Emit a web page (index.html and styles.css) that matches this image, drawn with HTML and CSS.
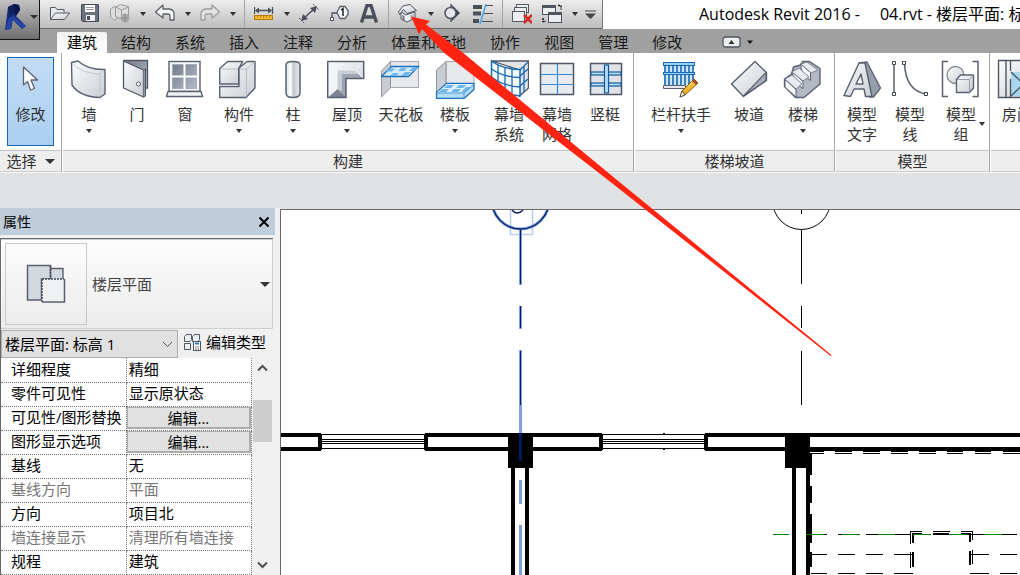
FILE: index.html
```
<!DOCTYPE html>
<html lang="zh-CN">
<head>
<meta charset="utf-8">
<meta name="viewport" content="width=device-width, initial-scale=1">
<title>Autodesk Revit 2016</title>
<link rel="stylesheet" href="styles.css">
</head>
<body>
<div class="app">
  <svg class="defs" width="0" height="0" aria-hidden="true">
    <defs>
      <linearGradient id="g" x1="0" y1="0" x2="1" y2="1"><stop offset="0" stop-color="#fdfdfe"/><stop offset="1" stop-color="#c9cdd4"/></linearGradient>
      <linearGradient id="gd" x1="0" y1="0" x2="1" y2="1"><stop offset="0" stop-color="#737b8b"/><stop offset="1" stop-color="#b4bac6"/></linearGradient>
      <linearGradient id="gh" x1="0" y1="0" x2="1" y2="0"><stop offset="0" stop-color="#dfe2e6"/><stop offset=".35" stop-color="#ffffff"/><stop offset=".5" stop-color="#c3c8cf"/><stop offset="1" stop-color="#e8eaed"/></linearGradient>
      <linearGradient id="go" x1="0" y1="0" x2="0" y2="1"><stop offset="0" stop-color="#ffd75e"/><stop offset="1" stop-color="#e39a0b"/></linearGradient>
    </defs>
  </svg>

  <header class="header">
    <button class="app-button" type="button" aria-label="应用程序菜单">
      <svg width="22" height="28" viewBox="5 2 22 28"><path d="M8 6 14 3l5 1 1 5-4 6 10 10-4 3-9-9-2 9-6 1z" fill="#17307f"/><path d="M14 3l5 1 1 5-4 6-2-3z" fill="#0b174a"/><path d="M8 6 14 3v9l-5 5z" fill="#10205e"/><path d="M13 15l13 10-4 3-9-9z" fill="#2846a5"/><path d="M9 17l4-2-2 13-6 1z" fill="#2644a0"/></svg>
      <i class="caret caret-wide"></i>
    </button>
    <div class="title-row">
      <div class="quick-access">
        <button class="tool" type="button" aria-label="打开"><svg width="20" height="20" viewBox="50 4 20 20"><path d="M50.500 19.500V7.500h5l1.500 2h7v3" fill="#e9eaec" stroke="#555a63"/><path d="M50.500 19.500l5-6.500h14l-5 6.500z" fill="url(#g)" stroke="#555a63" stroke-linejoin="round"/></svg></button>
        <button class="tool" type="button" aria-label="保存"><svg width="20" height="20" viewBox="80 4 20 20"><path d="M81.500 4.500h17v17h-16l-1-1z" fill="#69707e" stroke="#444a56"/><path d="M85 5h10v7H85z" fill="#fff"/><path d="M86 7.500h8M86 9.500h8" stroke="#9aa0aa"/><path d="M86 15h9v6h-9z" fill="#eef0f2"/><path d="M87 16h3v4h-3z" fill="#4b5260"/></svg></button>
        <button class="tool" type="button" aria-label="同步"><svg width="20" height="20" viewBox="110 4 20 20"><g fill="#dedede" stroke="#9a9a9a"><path d="M110.500 9l4-2.500 3 1.500v10l-3 2-4-2.500z"/><path d="M115.500 7l5-2.500 8 2v10l-6 3-7-3z"/><path d="M115.500 7l6 3 7-3M121.500 10v9"/></g><circle cx="125" cy="18" r="4.500" fill="#a9a9a9"/><path d="M121 18h8M125 14v8" stroke="#8b8b8b"/></svg></button>
        <button class="drop" type="button" aria-label="同步选项"><i class="caret"></i></button>
        <button class="tool" type="button" aria-label="放弃"><svg width="20" height="20" viewBox="155 4 20 20"><path d="M155.500 12l7.500-7v4h6q5 .5 5 5v6h-4v-4q0-2-2-2h-5v4z" fill="#f5f5f6" stroke="#5c616b" stroke-width="1.300" stroke-linejoin="round"/></svg></button>
        <button class="drop" type="button" aria-label="放弃列表"><i class="caret"></i></button>
        <button class="tool" type="button" aria-label="重做"><svg width="20" height="20" viewBox="199 4 20 20"><path d="M218.500 12l-7.500-7v4h-6q-5 .5-5 5v6h4v-4q0-2 2-2h5v4z" fill="#e4e4e4" stroke="#9d9d9d" stroke-width="1.300" stroke-linejoin="round"/></svg></button>
        <button class="drop" type="button" aria-label="重做列表"><i class="caret"></i></button>
        <span class="tool-sep"></span>
        <button class="tool" type="button" aria-label="测量"><svg width="20" height="20" viewBox="254 4 20 20"><path d="M254.500 7v7M272.500 7v7M256 10.500h15" stroke="#4b505b" stroke-width="1.300"/><path d="M255 10.500l4-3v6zM272 10.500l-4-3v6z" fill="#4b505b"/><rect x="254.500" y="15.500" width="18" height="4" fill="#f7b92b" stroke="#b87a08"/><path d="M257.500 16v1.500M260.500 16v1.500M263.500 16v1.500M266.500 16v1.500M269.500 16v1.500" stroke="#b87a08"/></svg></button>
        <button class="drop" type="button" aria-label="测量选项"><i class="caret"></i></button>
        <button class="tool" type="button" aria-label="对齐尺寸标注"><svg width="20" height="20" viewBox="299 4 20 20"><path d="M302 20l13-12" stroke="#4b505b" stroke-width="1.500"/><path d="M301 21l2-7 5 5zM317 6l-7 2 5 5z" fill="#4b505b"/><path d="M299 18l5 5M313 4l6 6" stroke="#4b505b" stroke-dasharray="2 1"/></svg></button>
        <button class="tool" type="button" aria-label="按类别标记"><svg width="20" height="20" viewBox="329 4 20 20"><path d="M332 18v-5h5" fill="none" stroke="#4b505b" stroke-width="1.300"/><path d="M330.500 17.500h3v3h-3z" fill="#fff" stroke="#4b505b"/><path d="M337 12.500l3-6h5l3 4v4l-3 4h-5z" fill="#f6f7f8" stroke="#5c616b" stroke-width="1.300"/><path d="M341 10l2-1.500V16" fill="none" stroke="#222" stroke-width="1.500"/></svg></button>
        <button class="tool" type="button" aria-label="文字"><svg width="20" height="20" viewBox="359 4 20 20"><path d="M361.500 22.500L367 5.500h4l5.500 17M364 17h10" fill="none" stroke="#4a4f59" stroke-width="3.400"/></svg></button>
        <span class="tool-sep"></span>
        <button class="tool" type="button" aria-label="默认三维视图"><svg width="20" height="20" viewBox="398 4 20 20"><path d="M401 12l5 3 9-3v6l-8 4-6-3z" fill="#f2f3f5" stroke="#505560"/><path d="M398.500 12l4.500-6 7-1.500 6.500 6-9.500 3-3.500-4-4 5z" fill="url(#g)" stroke="#505560" stroke-linejoin="round"/><path d="M402.500 15v5l2 1v-5z" fill="#6c7380"/><path d="M410 15l4-1v4l-4 1.500z" fill="#b8bdc6"/></svg></button>
        <button class="drop" type="button" aria-label="三维视图选项"><i class="caret"></i></button>
        <button class="tool" type="button" aria-label="剖面"><svg width="20" height="20" viewBox="443 4 20 20"><path d="M452 5l8 8-8 8z" fill="#3f4550"/><circle cx="450.500" cy="13" r="5.500" fill="#e6e8eb" stroke="#505560" stroke-width="1.500"/><path d="M451 4v4M451 18v4" stroke="#505560" stroke-width="1.500"/></svg></button>
        <button class="tool" type="button" aria-label="细线"><svg width="20" height="20" viewBox="473 4 20 20"><path d="M473 7h9M473 13.500h8M473 21h6" stroke="#4a4f5b" stroke-width="4"/><path d="M486 5.500h7M484 13.500h9M482 21.500h11" stroke="#4a4f5b" stroke-width="1"/><path d="M486 4l-6 20" stroke="#4ba2ef" stroke-width="1.500"/></svg></button>
        <span class="tool-sep"></span>
        <button class="tool" type="button" aria-label="关闭隐藏窗口"><svg width="20" height="20" viewBox="512 4 20 20"><g fill="#eceef0" stroke="#555b66"><rect x="516.500" y="4.500" width="12" height="8"/><rect x="514.500" y="7.500" width="12" height="8"/><rect x="512.500" y="11.500" width="12" height="10"/></g><path d="M524 15l8 8M532 15l-8 8" stroke="#d42a2a" stroke-width="2.600"/></svg></button>
        <button class="tool" type="button" aria-label="切换窗口"><svg width="20" height="20" viewBox="542 4 20 20"><rect x="542.500" y="5.500" width="13" height="9" fill="#eceef0" stroke="#4e5460"/><path d="M542 6.500h14" stroke="#4e5460" stroke-width="3"/><rect x="548.500" y="12.500" width="13" height="10" fill="#eceef0" stroke="#4e5460"/><path d="M548 13.500h14" stroke="#4e5460" stroke-width="3"/><path d="M558 5.500h3v4M543 18v3.500h3" fill="none" stroke="#111" stroke-width="1.500" stroke-dasharray="2 1"/></svg></button>
        <button class="drop" type="button" aria-label="窗口列表"><i class="caret"></i></button>
        <button class="drop drop-last" type="button" aria-label="自定义快速访问工具栏"><svg width="11" height="9" viewBox="0 0 11 9"><path d="M0 1h11" stroke="#444"/><path d="M0 3.500h11L5.500 9z" fill="#444"/></svg></button>
      </div>
      <h1 class="title"><span>Autodesk Revit 2016 -</span><span>04.rvt - 楼层平面: 标高 1</span></h1>
    </div>
    <nav class="tabs">
      <button class="tab tab-active" type="button">建筑</button>
      <button class="tab" type="button">结构</button>
      <button class="tab" type="button">系统</button>
      <button class="tab" type="button">插入</button>
      <button class="tab" type="button">注释</button>
      <button class="tab" type="button">分析</button>
      <button class="tab" type="button">体量和场地</button>
      <button class="tab" type="button">协作</button>
      <button class="tab" type="button">视图</button>
      <button class="tab" type="button">管理</button>
      <button class="tab" type="button">修改</button>
      <button class="ribbon-toggle" type="button" aria-label="最小化功能区"><svg width="32" height="12" viewBox="0 0 32 12"><rect x="1" y="1" width="17" height="10" rx="2.500" fill="#eceef0" stroke="#4f5560" stroke-width="1.300"/><path d="M6.500 8h6l-3-4z" fill="#333"/><path d="M25 4.500h6L28 8z" fill="#111"/></svg></button>
    </nav>
  </header>

  <section class="ribbon">
    <div class="panel panel-select">
      <div class="panel-body">
        <button class="modify" type="button"><svg width="40" height="40" viewBox="11 62 40 40"><path d="M23.500 67v18l4-3.500 3 8.500 4-1.500-3.500-8.500h6.500z" fill="#fff" stroke="#5c6370" stroke-width="1.300" stroke-linejoin="round"/></svg>修改</button>
      </div>
      <div class="panel-foot">选择 <i class="caret caret-big"></i></div>
    </div>

    <div class="panel panel-build">
      <div class="panel-body">
        <button class="cmd" type="button"><svg width="40" height="40" viewBox="68 59 40 40"><path d="M70.500 62.500L77 61q10 9 27 8.500V94l-5 3.500Q79 97 71 85z" fill="url(#g)" stroke="#596070" stroke-width="1.400" stroke-linejoin="round"/><path d="M71.500 63.500q9 10 27.500 10.500l4-3.500M99 74v22.500" fill="none" stroke="#c3c7cf"/></svg>墙<i class="caret"></i></button>
        <button class="cmd" type="button"><svg width="40" height="40" viewBox="116 59 40 40"><path d="M122.500 60.500h24V88h-5" fill="url(#gd)" stroke="#4f5664" stroke-width="1.300"/><path d="M122.500 61l20 9v27l-20-9z" fill="url(#g)" stroke="#4f5664" stroke-width="1.300" stroke-linejoin="round"/><path d="M142.500 70l2-1v27l-2 1" fill="#9097a4" stroke="#4f5664"/><circle cx="137.500" cy="84" r="2" fill="#fff" stroke="#596070"/></svg>门</button>
        <button class="cmd" type="button"><svg width="40" height="40" viewBox="165 59 40 40"><rect x="169" y="61.500" width="31" height="30" fill="#f5f6f8" stroke="#596070" stroke-width="1.400"/><rect x="172.500" y="64.500" width="24" height="24" fill="url(#gd)" stroke="#a6acb8"/><path d="M184.500 64v25M172 76.500h25" stroke="#fff" stroke-width="2"/><path d="M168 91.500h33l1.500 5h-36z" fill="#f2f3f5" stroke="#596070" stroke-width="1.400" stroke-linejoin="round"/></svg>窗</button>
        <button class="cmd cmd-wide" type="button"><svg width="40" height="40" viewBox="219 59 40 40"><g fill="url(#g)" stroke="#596070" stroke-width="1.400" stroke-linejoin="round"><path d="M219.700 68.500l8-7h15l-4 7v15.500h-19z"/><path d="M239 68l8-6.500h8V88l-9 9.500h-26.300v-11h19.300z"/></g><path d="M220.500 69h17.500M240 69h6.500l8-7M246.500 69v27.500" fill="none" stroke="#b9bec7"/></svg>构件<i class="caret"></i></button>
        <button class="cmd" type="button"><svg width="40" height="40" viewBox="271 59 40 40"><path d="M284 65q0-3.500 7-3.500t7 3.500v28q0 4.500-7 4.500t-7-4.500z" fill="url(#gh)" stroke="#596070" stroke-width="1.500"/></svg>柱<i class="caret"></i></button>
        <button class="cmd cmd-wide" type="button"><svg width="40" height="40" viewBox="326 59 40 40"><path d="M326.700 61.500h36v17H345v19h-18.300z" fill="url(#g)"/><path d="M336 70h17l9 8h-17v19l-9-8z" fill="#9da4b1"/><path d="M327 62l9 8v19l-9 8z" fill="#f4f5f7"/><path d="M336 89l9 8h-18z" fill="#7d8594"/><path d="M336 70h17l4 4h-16v17l-5-2z" fill="#c9cdd5"/><path d="M327 62l9 8h18l8-8M336 70v19l-9 8M354 70l8 8" fill="none" stroke="#f5f6f8"/><path d="M326.700 61.500h36v17H345v19h-18.300z" fill="none" stroke="#596070" stroke-width="1.500"/></svg>屋顶<i class="caret"></i></button>
        <button class="cmd" type="button"><svg width="40" height="40" viewBox="381 59 40 40"><path d="M390.500 61.500h28v26h-28z" fill="#e7e8eb" stroke="#a3a7af"/><path d="M381.500 71l9-9.500v26l-9 9.500z" fill="#c9ccd1" stroke="#8f949e"/><path d="M381.500 76.500l10-10h27l-10 10z" fill="#d5ebfb" stroke="#1c70bd" stroke-width="1.300"/><path d="M389 68.500h6l-3 3h-6zM401 68h6l-3 3h-6zM393 73h6l-3 3h-6zM405 72h6l-4 4h-6zM413 67h5l-4 4h-5z" fill="#6db5ee"/></svg>天花板</button>
        <button class="cmd cmd-wide" type="button"><svg width="40" height="40" viewBox="435 59 40 40"><path d="M446 61.500h28V84h-28z" fill="#e7e8eb" stroke="#a3a7af"/><path d="M436.500 70l9.500-8.500V84l-9.500 9z" fill="#c9ccd1" stroke="#8f949e"/><path d="M436.500 92.500l10-9H474v6l-10 9h-27.500z" fill="#b5dcf6" stroke="#1c70bd" stroke-width="1.300" stroke-linejoin="round"/><path d="M437 92.500l10-8.500h26.500L464 92.500z" fill="#e0f1fd"/><path d="M447 85h7l-3 3h-7zM459 85h7l-3 3h-7zM442 89h7l-3 3h-7zM454 89h7l-3 3h-7zM466 87h5l-5 5h-5z" fill="#6db5ee"/><path d="M437 93h27l9.500-8.500M464 93v5" fill="none" stroke="#4a9bd9"/></svg>楼板<i class="caret"></i></button>
        <button class="cmd" type="button"><svg width="40" height="40" viewBox="489 59 40 40"><path d="M492 61h36.500v27l-9 8V70z" fill="#e2e4e8" stroke="#4f5664" stroke-width="1.300"/><path d="M491.500 61Q502 69 520 69.500V96q-17-2-28.500-12z" fill="#f5faff" stroke="#1769b3" stroke-width="1.500"/><path d="M491.500 69q11 8 28.500 8.500M491.500 77q11 9 28.500 10M498 65v24M505 68v25M512 69v26M520 76l8-7M520 86l8-7M520 70l8-8M524 66v26" fill="none" stroke="#1769b3" stroke-width="1.300"/></svg>幕墙<br>系统</button>
        <button class="cmd" type="button"><svg width="40" height="40" viewBox="537 59 40 40"><rect x="540.500" y="63.500" width="33" height="31" fill="#e8eaed" stroke="#4f5664" stroke-width="1.500"/><path d="M557.500 64v30M541 74.500h33M541 84.500h33" stroke="#2f8be0" stroke-width="1.200"/></svg>幕墙<br>网格</button>
        <button class="cmd" type="button"><svg width="40" height="40" viewBox="585 59 40 40"><rect x="590.500" y="63.500" width="31" height="31" fill="#dfe2e7" stroke="#4f5664" stroke-width="1.500"/><g fill="#b9def8" stroke="#0f5a9c" stroke-width="1.200"><rect x="591" y="72" width="30" height="3"/><rect x="591" y="83" width="30" height="3"/><rect x="604.500" y="65" width="4" height="28"/></g></svg>竖梃</button>
      </div>
      <div class="panel-foot">构建</div>
    </div>

    <div class="panel">
      <div class="panel-body">
        <button class="cmd cmd-extra" type="button"><svg width="40" height="40" viewBox="661 59 40 40"><path d="M664 66h30v19h-30z" fill="#cfe6f8"/><path d="M665 75v10M669 75v10M673 75v10M677 75v10M681 75v10M685 75v10M689 75v10M693 75v8M665 66v6M669 66v6M673 66v6M677 66v6M681 66v6M685 66v6M689 66v6M693 66v6" stroke="#1769b3" stroke-width="1.600"/><g stroke="#1769b3" fill="#9ed1f6"><rect x="663.500" y="62.500" width="31" height="3"/><rect x="663.500" y="72.500" width="31" height="2"/></g><path d="M663.500 85.500h22v3h-22z" fill="#e8eaed" stroke="#596070"/><path d="M680 97l2-6 12-12 4 4-13 12z" fill="url(#go)" stroke="#8a5b12"/><path d="M680 97l2-6 3 4z" fill="#fff4da" stroke="#555"/><path d="M692 81l2-2 4 4-2 2z" fill="#a44c24"/></svg>栏杆扶手<i class="caret"></i></button>
        <button class="cmd" type="button"><svg width="40" height="40" viewBox="729 59 40 40"><path d="M731.500 84L755 61.500l11.500 11v8L743.500 96.500z" fill="url(#g)" stroke="#596070" stroke-width="1.400" stroke-linejoin="round"/><path d="M743.500 96l22.500-23.500v8z" fill="#a9afba" stroke="#596070" stroke-width="1.200" stroke-linejoin="round"/></svg>坡道</button>
        <button class="cmd cmd-wide" type="button"><svg width="40" height="40" viewBox="782 59 40 40"><path d="M783.500 79l7-5 2-7 7-2 2-3.500h7l10.500 7V84l-16 13.500h-8.500l-11-11z" fill="#b3b8c2" stroke="#596070" stroke-width="1.400" stroke-linejoin="round"/><path d="M784 79.500l11 10v7.500l-11-10zM791 72l11 9.500v7l-8-6zM799.500 64l10 8.500v8l-8-6z" fill="#fafafb" stroke="#596070" stroke-linejoin="round"/><path d="M784 79l7-4 10 9-6 5zM791 72l7-4 10 9-6 4zM800 64l6-2 11 8-7 3z" fill="#e8eaee" stroke="#7b818e"/></svg>楼梯<i class="caret"></i></button>
      </div>
      <div class="panel-foot">楼梯坡道</div>
    </div>

    <div class="panel">
      <div class="panel-body">
        <button class="cmd" type="button"><svg width="40" height="40" viewBox="842 59 40 40"><path d="M859 63l8-1 13.500 26-7 9h-4z" fill="#969dab" stroke="#596070" stroke-width="1.300" stroke-linejoin="round"/><path d="M844 95.500L859 63h6l7 33.500h-6.500L864 89h-10l-3.500 7.500zM856 84h7l-2-10z" fill="url(#g)" fill-rule="evenodd" stroke="#596070" stroke-width="1.400" stroke-linejoin="round"/></svg>模型<br>文字</button>
        <button class="cmd" type="button"><svg width="40" height="40" viewBox="890 59 40 40"><path d="M894 63v31M904.500 63q1 28 22 31" fill="none" stroke="#596070" stroke-width="1.500"/><g fill="#fff" stroke="#3f4550"><path d="M892.500 61.500h3v3h-3zM892.500 92.500h3v3h-3zM902.500 61.500h3v3h-3zM924.500 92.500h3v3h-3z"/></g></svg>模型<br>线</button>
        <button class="cmd cmd-group" type="button"><svg width="40" height="40" viewBox="940 59 40 40"><path d="M947 61.500h-5.500v35h5.500M971.500 61.500h5.500v35h-5.500" fill="none" stroke="#596070" stroke-width="1.500"/><circle cx="954.500" cy="75" r="8.500" fill="url(#g)" stroke="#848a96" stroke-width="1.300"/><path d="M955.500 79.500l4-4.500h13v13l-4 4.500h-13z" fill="url(#g)" stroke="#596070" stroke-width="1.400" stroke-linejoin="round"/><path d="M956 79.500h12.500v13M968.500 79.500l4-4.500" fill="none" stroke="#969ca8"/></svg><span>模型<br>组</span><i class="caret caret-side"></i></button>
      </div>
      <div class="panel-foot">模型</div>
    </div>

    <div class="panel panel-rest">
      <div class="panel-body">
        <button class="cmd" type="button"><svg width="40" height="40" viewBox="997 59 40 40"><path d="M998.500 60.500h38v37h-38z" fill="url(#g)" stroke="#4f5664" stroke-width="1.400"/><path d="M1011 72h25v24h-25z" fill="#a9d8ec"/><path d="M1010.500 61v10M1010.500 79v18M1006 61v36M1011 72l25 24M1011 96l25-24" fill="none" stroke="#4f5664" stroke-width="1.400"/></svg>房间</button>
      </div>
      <div class="panel-foot"></div>
    </div>
  </section>

  <div class="options-bar"></div>

  <main class="workspace">
    <aside class="properties">
      <div class="prop-title"><h2>属性</h2><button class="close" type="button" aria-label="关闭"><svg width="12" height="12" viewBox="0 0 12 12"><path d="M1.500 1.500l9 9M10.500 1.500l-9 9" stroke="#000" stroke-width="2"/></svg></button></div>
      <div class="prop-body">
        <button class="type-picker" type="button">
          <span class="type-thumb"><svg width="42" height="42" viewBox="25 262 42 42"><path d="M46 267.500h17v16H46z" fill="#d3d7de" stroke="#596070" stroke-width="1.400"/><path d="M27.500 264.500h23v13.500h-9v21h-14z" fill="#d3d7de" stroke="#596070" stroke-width="1.500"/><path d="M42 278h22.500v23H42z" fill="#f0f1f3"/><path d="M64.500 278v23H42" fill="none" stroke="#596070" stroke-width="1.500"/><path d="M50.500 265v13M42 278h22M42 278v23" fill="none" stroke="#444b57" stroke-width="1.500" stroke-dasharray="2 1"/></svg></span>
          <span class="type-name">楼层平面</span><i class="caret caret-big"></i>
        </button>
        <div class="type-row">
          <div class="select-wrap"><select aria-label="视图"><option>楼层平面: 标高 1</option></select><svg class="chevron" width="11" height="7" viewBox="0 0 11 7"><path d="M1 1l4.500 4.500L10 1" fill="none" stroke="#555"/></svg></div>
          <button class="edit-type" type="button"><svg width="18" height="18" viewBox="0 0 18 18"><g fill="#eef0f3" stroke="#4f5664"><path d="M.5 3.500l2-2h5v5l-1.500 2H.500zM8.500 3.500l2-2h5v5l-1.500 2H8.500zM.500 10.500h6v6h-6z"/></g><rect x="9.500" y="8.500" width="7" height="9" fill="#fff" stroke="#4f5664"/><path d="M11 10.500h4" stroke="#2379c9" stroke-width="2"/><path d="M11 14h1.500m1 0H15M11 16h1.500m1 0H15" stroke="#555"/></svg>编辑类型</button>
        </div>
        <div class="grid-area">
          <table class="props">
            <tbody>
              <tr><th scope="row">详细程度</th><td>精细</td></tr>
              <tr><th scope="row">零件可见性</th><td>显示原状态</td></tr>
              <tr><th scope="row">可见性/图形替换</th><td class="has-button"><button class="edit" type="button">编辑...</button></td></tr>
              <tr><th scope="row">图形显示选项</th><td class="has-button"><button class="edit" type="button">编辑...</button></td></tr>
              <tr><th scope="row">基线</th><td>无</td></tr>
              <tr class="muted"><th scope="row">基线方向</th><td>平面</td></tr>
              <tr><th scope="row">方向</th><td>项目北</td></tr>
              <tr class="muted"><th scope="row">墙连接显示</th><td>清理所有墙连接</td></tr>
              <tr><th scope="row">规程</th><td>建筑</td></tr>
            </tbody>
          </table>
          <div class="scrollbar">
            <button type="button" aria-label="向上滚动"><svg width="11" height="8" viewBox="0 0 11 8"><path d="M1 6.500L5.500 2 10 6.500" fill="none" stroke="#505050" stroke-width="2"/></svg></button>
            <div class="track"><div class="thumb"></div></div>
            <button type="button" aria-label="向下滚动"><svg width="11" height="8" viewBox="0 0 11 8"><path d="M1 1.500L5.500 6 10 1.500" fill="none" stroke="#505050" stroke-width="2"/></svg></button>
          </div>
        </div>
      </div>
    </aside>

    <section class="canvas" aria-label="楼层平面">
      <svg class="drawing" viewBox="281 210 739 365" preserveAspectRatio="xMinYMin slice">
        <g fill="none">
          <path d="M510.500 210v24.500h22V210" stroke="#bccaf0" stroke-width="1.500"/>
          <circle cx="520.500" cy="200.500" r="28.500" stroke="#7f9fe0" stroke-width="3"/>
          <circle cx="520.500" cy="200.500" r="28.500" stroke="#041c66" stroke-width="1.300"/>
          <path d="M512 210q5 6 11 0" stroke="#041c66" stroke-width="1.500"/>
          <circle cx="801.500" cy="200.500" r="29" stroke="#000"/>
          <path d="M801.500 210v4M801.500 230v54M801.500 306v22M801.500 351v54" stroke="#000"/>
        </g>
        <g shape-rendering="crispEdges">
          <path d="M281 433h40v4h-40zM281 447h40v4h-40zM318 434h4v16h-4zM424 434h4v16h-4zM425 433h177v4H425zM425 447h177v4H425zM599 434h4v16h-4zM704 434h4v16h-4zM705 433h315v4H705zM705 447h315v4H705z"/>
          <path d="M508 433h25v35h-25zM785 433h25v35h-25zM511 468h4v107h-4zM525 468h4v107h-4zM792 468h4v107h-4zM806 468h4v107h-4z"/>
          <path d="M322 434.500h102M322 439.500h102M322 441.500h102M322 443.500h102M322 448.500h102M603 434.500h101M603 439.500h101M603 441.500h101M603 443.500h101M603 448.500h101M663 433.500h2M663 449.500h2" stroke="#000"/>
          <path d="M810 453.500h14M835 453.500h17M863 453.500h17M891 453.500h17M919 453.500h17M947 453.500h16M975 453.500h16M1003 453.500h17M810 451.500h14M835 451.500h17M863 451.500h17M891 451.500h17M919 451.500h17M947 451.500h16M975 451.500h16M1003 451.500h17" stroke="#000"/>
          <path d="M811 453v22M811 486v17M811 514v29M811 552v15" stroke="#000" stroke-width="2"/>
          <path d="M824 534.500h3M838 534.500h4M866 534.500h12M895 534.500h16M967 534.500h17M1002 534.500h15M811 554.500h16M838 554.500h17M866 554.500h17M894 554.500h19M971 554.500h18M1000 554.500h17M811 573.500h16M838 573.500h17M866 573.500h17M894 573.500h19M970 573.500h19M1000 573.500h17" stroke="#000"/>
          <path d="M910 531.500h12M933 531.500h17M961 531.500h12M910.500 531v13M910.500 552v16M972.500 531v9M972.500 550v14M912 533.500h10M961 533.500h10" fill="none" stroke="#000"/>
          <path d="M933 534h16M913 533v10M913 552v15M970 534v8M970 551v14" fill="none" stroke="#000" stroke-width="2"/>
          <path d="M773 534h16v1h-16zM806 534h18v1h-18zM842 534h18v1h-18zM878 534h17v1h-17zM913 534h18v1h-18zM949 534h18v1h-18zM984 534h18v1h-18z" fill="#008000"/>
          <path d="M520.500 230v55M520.500 306v23M520.500 350v83M520.500 480v24M520.500 525v50" stroke="#7f9fe0" stroke-width="3"/>
          <path d="M520.500 230v54M520.500 306v22M520.500 351v54" stroke="#041c66"/>
          <path d="M520.500 433v28" stroke="#001a5e" stroke-width="3"/>
        </g>
      </svg>
    </section>
  </main>

  <svg class="callout" width="1020" height="575" viewBox="0 0 1020 575" aria-hidden="true"><path d="M411 16.500l19 4.500-4 3.500L462 52l155 128 214.500 175-.8 1L608 180 443 52l-21-23-3 5.500z" fill="#ff2412"/></svg>
</div>
</body>
</html>
```
FILE: styles.css
```
* {
  box-sizing: border-box;
}

body {
  margin: 0;
  background: #e0e1e3;
  color: #000;
  font: 15px/20px "Open Sans", "Noto Sans CJK SC", sans-serif;
}

button,
select {
  margin: 0;
  padding: 0;
  border: 0;
  background: none;
  color: inherit;
  font: inherit;
}

h1,
h2 {
  margin: 0;
  font-weight: 400;
}

svg {
  display: block;
  flex: none;
}

.defs {
  position: absolute;
}

.app {
  position: relative;
  display: flex;
  flex-direction: column;
  min-height: 100vh;
  overflow: hidden;
}

.caret {
  flex: none;
  border: 3px solid transparent;
  border-top: 4px solid #333;
  border-bottom: 0;
}

.caret-big,
.caret-wide {
  border-width: 5px 5px 0;
}

.caret-wide {
  border-width: 4px 4px 0;
}

/* Header */

.header {
  display: grid;
  grid-template-columns: 40px minmax(0, 1fr);
  grid-template-rows: 29px 24px;
  background: #a0a0a0;
}

.app-button {
  grid-row: 1 / 3;
  display: flex;
  align-items: center;
  justify-content: center;
  gap: 3px;
  height: 40px;
  padding: 0 0 6px 4px;
  border: solid #111;
  border-width: 0 1px 1px 0;
  background: linear-gradient(#c2c2c2, #6e6e6e);
}

.title-row {
  display: flex;
  background: #fff;
}

.quick-access {
  flex: none;
  display: flex;
  align-items: center;
  padding: 0 3px 0 5px;
  border-right: 1px solid #777;
  border-bottom: 1px solid #696969;
  background: linear-gradient(#eeeeee, #bdbdbd);
}

.tool,
.drop {
  display: flex;
  align-items: center;
  justify-content: center;
  width: 30px;
  height: 28px;
}

.drop {
  width: 15px;
}

.drop-last {
  width: 17px;
}

.tool-sep {
  width: 1px;
  height: 28px;
  margin: 0 4px;
  background: #a5a5a5;
}

.title {
  display: flex;
  gap: 20px;
  min-width: 0;
  padding-left: 96px;
  overflow: hidden;
  font-size: 16px;
  line-height: 29px;
  white-space: nowrap;
}

.tabs {
  display: flex;
  gap: 4px;
  padding: 3px 0 0 17px;
  color: #1a1a1a;
  white-space: nowrap;
}

.tab {
  padding: 0 10px 2px;
}

.tab-active {
  border-radius: 2px 2px 0 0;
  background: linear-gradient(#f2f2f2, #ffffff);
  color: #000;
}

.ribbon-toggle {
  margin-left: 26px;
  padding-bottom: 2px;
}

/* Ribbon */

.ribbon {
  display: flex;
  gap: 1px;
  border-bottom: 1px solid #f8f8f8;
  background: #fff;
  color: #333;
  overflow: hidden;
}

.panel {
  flex: none;
  display: flex;
  flex-direction: column;
  border-right: 1px solid #a8a8a8;
}

.panel-body {
  display: flex;
  height: 97px;
  padding: 6px 1px 0 2px;
}

.panel-foot {
  display: flex;
  align-items: center;
  justify-content: center;
  gap: 8px;
  height: 22px;
  border-top: 1px solid #c6c6c6;
  border-bottom: 1px solid #cccccc;
  background: #eeeeee;
}

.panel-select {
  width: 62px;
}

.panel-select .panel-body {
  padding: 4px 7px;
}

.panel-build .panel-body {
  padding-right: 4px;
}

.panel-rest {
  flex: 1 0 auto;
  border-right: 0;
}

.modify {
  display: flex;
  flex-direction: column;
  align-items: center;
  gap: 2px;
  width: 47px;
  padding-top: 4px;
  border: 1px solid #1766b5;
  background: linear-gradient(#c3dcf5, #abcff0);
}

.cmd {
  position: relative;
  display: flex;
  flex-direction: column;
  align-items: center;
  width: 48px;
  white-space: nowrap;
}

.cmd svg {
  margin-bottom: 5px;
}

.cmd .caret {
  margin-top: 5px;
}

.cmd-wide {
  width: 60px;
}

.cmd-extra {
  width: 88px;
}

.cmd-group {
  width: 54px;
}

.cmd .caret-side {
  position: absolute;
  right: 3px;
  top: 58px;
}

.options-bar {
  height: 35px;
  background: #e0e1e3;
}

/* Workspace */

.workspace {
  flex: 1;
  display: grid;
  grid-template-columns: 280px minmax(0, 1fr);
}

.properties {
  display: flex;
  flex-direction: column;
  gap: 3px;
  padding-right: 5px;
  background: #f0f0f0;
}

.prop-title {
  display: flex;
  align-items: center;
  justify-content: space-between;
  height: 27px;
  padding: 0 5px 0 3px;
  background: #bfcddb;
}

.prop-title h2 {
  font-size: 14px;
}

.prop-body {
  flex: 1;
  display: flex;
  flex-direction: column;
  margin-right: 2px;
  border-top: 1px solid #696969;
  border-left: 1px solid #696969;
}

.type-picker {
  display: flex;
  align-items: center;
  gap: 5px;
  height: 90px;
  padding: 0 2px 0 4px;
  border: 1px solid #cfcfcf;
  border-left: 0;
  background: linear-gradient(#fdfdfd, #ebebeb);
  color: #444;
}

.type-thumb {
  display: flex;
  align-items: center;
  justify-content: center;
  width: 82px;
  height: 82px;
  border: 1px solid #c8c8c8;
}

.type-name {
  flex: 1;
  text-align: left;
}

.type-row {
  display: flex;
  gap: 6px;
  height: 29px;
}

.select-wrap {
  position: relative;
  width: 177px;
  padding-top: 1px;
}

.select-wrap select {
  width: 100%;
  height: 28px;
  padding: 0 3px;
  border: 1px solid #adadad;
  background: #e1e1e1;
  appearance: none;
}

.chevron {
  position: absolute;
  right: 5px;
  top: 12px;
}

.edit-type {
  display: flex;
  align-items: center;
  gap: 4px;
  height: 25px;
}

.grid-area {
  flex: 1;
  display: flex;
  align-items: flex-start;
  gap: 1px;
}

.props {
  width: 251px;
  height: 216px;
  table-layout: fixed;
  border-collapse: collapse;
  background: #fff;
}

.props th,
.props td {
  height: 24px;
  padding: 0 0 2px 2px;
  border-right: 1px dotted #777;
  border-bottom: 1px dotted #777;
  font-weight: 400;
  text-align: left;
  white-space: nowrap;
}

.props th {
  padding-left: 10px;
}

.props .has-button {
  padding: 0;
}

.muted {
  color: #777;
}

.edit {
  display: block;
  width: 100%;
  height: 22px;
  border: solid #adadad;
  border-width: 1px 2px 2px 1px;
  background: #e1e1e1;
}

.scrollbar {
  display: flex;
  flex-direction: column;
  align-self: stretch;
  width: 19px;
}

.scrollbar button {
  display: flex;
  align-items: center;
  justify-content: center;
  height: 20px;
}

.track {
  flex: 1;
  padding-top: 22px;
}

.thumb {
  height: 42px;
  background: #cdcdcd;
}

.canvas {
  margin-top: 1px;
  border: solid #696969;
  border-width: 1px 0 0 1px;
  background: #fff;
  overflow: hidden;
}

.drawing {
  width: 100%;
}

.callout {
  position: absolute;
  left: 0;
  top: 0;
  pointer-events: none;
}
```
